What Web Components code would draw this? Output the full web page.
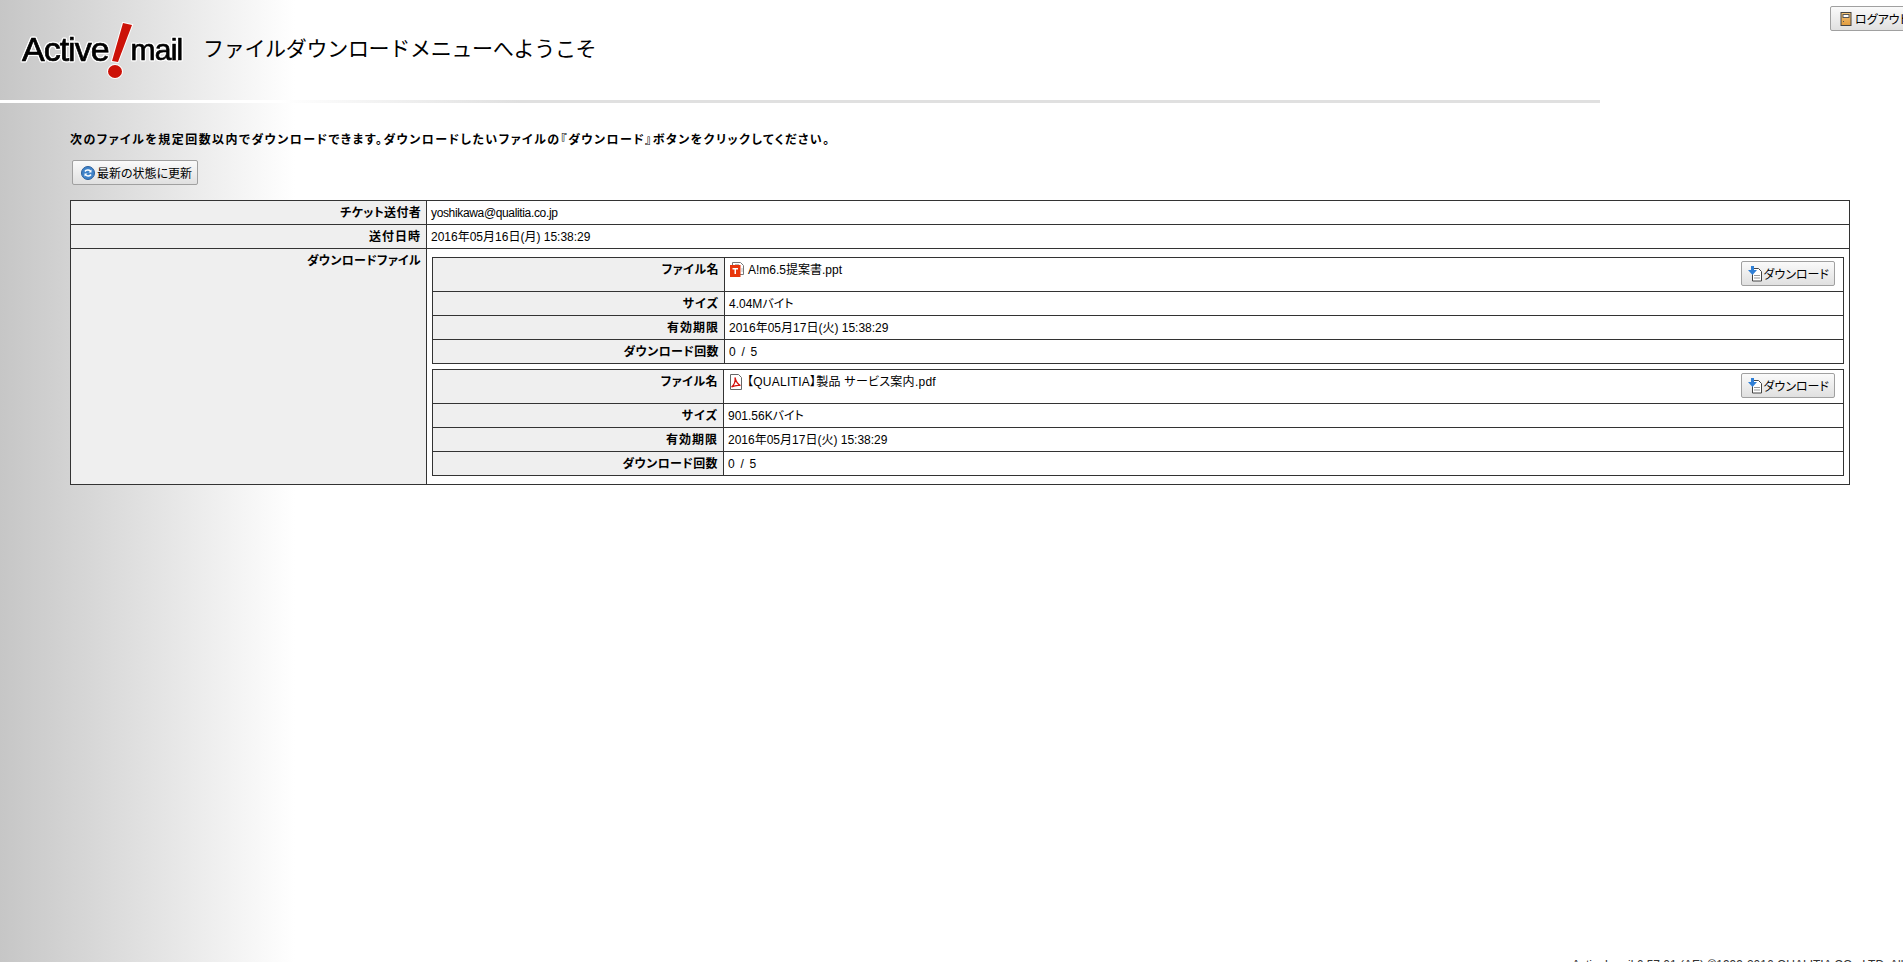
<!DOCTYPE html>
<html lang="ja">
<head>
<meta charset="utf-8">
<title>Active! mail</title>
<style>
  html, body { margin: 0; height: 100%; overflow: hidden; }
  body {
    width: 1903px;
    height: 962px;
    font: 12px "Liberation Sans", "Noto Sans CJK JP", sans-serif;
    color: #000;
    background: #fff linear-gradient(to right, #c6c6c6 0, #e2e2e2 150px, #fff 295px) no-repeat;
    display: flex;
    flex-direction: column;
  }
</style>
</head>
<body>
  <am-header title-text="ファイルダウンロードメニューへようこそ"></am-header>
  <am-content>
    <am-ticket sender="yoshikawa@qualitia.co.jp" sent="2016年05月16日(月) 15:38:29">
      <am-file name="A!m6.5提案書.ppt" kind="ppt" size="4.04Mバイト" limit="2016年05月17日(火) 15:38:29" count="0 / 5" label-width="292"></am-file>
      <am-file name="【QUALITIA】製品 サービス案内.pdf" kind="pdf" size="901.56Kバイト" limit="2016年05月17日(火) 15:38:29" count="0 / 5" label-width="291"></am-file>
    </am-ticket>
  </am-content>
  <am-footer>Active! mail 6.57.01 (AE) ©1999-2016 QUALITIA CO., LTD. All Rights Reserved.</am-footer>

<script>
// Icons, all 16x16 and drawn by hand from the reference
const ICONS = {
  logout: `<svg width="16" height="16" viewBox="0 0 16 16"><defs><linearGradient id="door" x1="0" y1="0" x2="0" y2="1"><stop offset="0" stop-color="#f6c67a"/><stop offset="1" stop-color="#e09a3c"/></linearGradient></defs><rect x="3" y="1.500" width="10" height="13" fill="url(#door)" stroke="#444"/><rect x="5" y="3.500" width="6" height="3" fill="#fff" stroke="#555"/><rect x="5" y="10" width="1" height="1" fill="#555"/></svg>`,
  refresh: `<svg width="16" height="16" viewBox="0 0 16 16"><circle cx="8" cy="8" r="6.500" fill="#3f83c9" stroke="#2a5f9c"/><path d="M5 6.500C6 4.800 9 4.600 10.500 6M11 9.500C10 11.200 7 11.400 5.500 10" fill="none" stroke="#fff" stroke-width="1.500"/><path d="M11.500 4.500v3H8.500zM4.500 11.500v-3h3z" fill="#fff"/></svg>`,
  download: `<svg width="16" height="16" viewBox="0 0 16 16"><path d="M4.500 2.500h6l3 3v9.500h-9z" fill="#fff" stroke="#444"/><path d="M6 9.500h6M6 12h6" stroke="#999"/><path d="M3 0h3v4h3L4.500 9 0 4h3z" fill="#2f7fd6"/></svg>`,
  ppt: `<svg width="16" height="16" viewBox="0 0 16 16"><path d="M3.500 .5h8l3 3v9h-11z" fill="#fff" stroke="#777"/><path d="M6 2.500h4M13 6v4" stroke="#bbb"/><rect x="1" y="3" width="10.500" height="12" fill="#e8360c"/><path d="M3.500 6h5.500v1.500H7V12H5.500V7.500h-2z" fill="#fff"/></svg>`,
  pdf: `<svg width="16" height="16" viewBox="0 0 16 16"><path d="M2.500 .5h8l3 3v12h-11z" fill="#fff" stroke="#666"/><path d="M3.500 13C6 11 7.500 7 7 3.500 8 7.500 10 10.500 12.500 11.500 9.500 11 6.500 11.500 3.500 13z" fill="none" stroke="#d4140f" stroke-width="1.200"/></svg>`
};

// Grey bevelled button with an icon in front of the label
class AmButton extends HTMLElement {
  constructor() {
    super();
    this.attachShadow({ mode: 'open' });
    this.shadowRoot.innerHTML = `
      <style>
        :host { display: inline-flex; }
        .btn {
          box-sizing: border-box;
          display: flex;
          align-items: center;
          gap: 1px;
          height: 25px;
          padding: 0 5px 0 7px;
          white-space: nowrap;
          font: 12px "Liberation Sans", "Noto Sans CJK JP", sans-serif;
          font-feature-settings: "palt";
          color: #000;
          border: 1px solid #a0a0a0;
          border-radius: 2px;
          background: linear-gradient(#fafafa, #e0e0e0);
        }
        :host([icon="download"]) .btn { padding-left: 6px; gap: 0; }
        svg { display: block; flex: none; }
      </style>
      <div class="btn">${ICONS[this.getAttribute('icon')] || ''}<slot></slot></div>
    `;
  }
}

// Top band: logo, page title and the logout button running off the right edge
class AmHeader extends HTMLElement {
  constructor() {
    super();
    this.attachShadow({ mode: 'open' });
    this.shadowRoot.innerHTML = `
      <style>
        :host { display: block; flex: none; }
        .band {
          display: grid;
          grid-template-columns: 203px 1627px 200px;
          height: 100px;
        }
        .logo { display: flex; align-items: flex-start; padding: 23px 0 0 22px; position: relative; }
        .word {
          font: 34px/1 "Liberation Sans", sans-serif;
          color: #000;
          -webkit-text-stroke: .7px #000;
          filter: drop-shadow(1px 0 0 #fff) drop-shadow(-1px 0 0 #fff) drop-shadow(0 1px 0 #fff) drop-shadow(0 -1px 0 #fff);
          letter-spacing: -1px;
          margin-top: 9px;
        }
        .word.mail { font-size: 30px; margin-top: 12px; margin-left: 22px; letter-spacing: -.8px; }
        .bang { position: absolute; left: 98px; top: 20px; }
        h1 {
          margin: 0;
          padding-top: 35px;
          font: 21px/1.2 "Noto Sans CJK JP", sans-serif;
          letter-spacing: -.3px;
          white-space: nowrap;
        }
        .out { padding-top: 6px; }
        .rule {
          width: 1600px;
          height: 3px;
          background: linear-gradient(to right, #fff 0, #fff 280px, #e0e0e0 520px);
        }
      </style>
      <div class="band">
        <div class="logo">
          <span class="word">Active</span>
          <svg class="bang" width="40" height="62" viewBox="0 0 40 62">
            <path d="M25 3 L34 5 L20 42 L14 41 Z" fill="#cc1208" stroke="#fff" stroke-width="2" paint-order="stroke"/>
            <ellipse cx="17" cy="51.500" rx="7" ry="6.500" fill="#cc1208" stroke="#fff" stroke-width="2" paint-order="stroke"/>
          </svg>
          <span class="word mail">mail</span>
        </div>
        <h1>${this.getAttribute('title-text')}</h1>
        <div class="out"><am-button icon="logout">ログアウト</am-button></div>
      </div>
      <div class="rule"></div>
    `;
  }
}

// Page body under the header: the instruction line, refresh button and table
class AmContent extends HTMLElement {
  constructor() {
    super();
    this.attachShadow({ mode: 'open' });
    this.shadowRoot.innerHTML = `
      <style>
        :host { display: block; flex: 1; padding: 28px 53px 0 70px; }
        p { margin: 0 0 11px; font-weight: bold; font-feature-settings: "palt"; letter-spacing: 1.450px; line-height: 18px; height: 18px; white-space: nowrap; }
        .bar { padding-left: 2px; margin-bottom: 15px; height: 25px; }
      </style>
      <p>次のファイルを規定回数以内でダウンロードできます。ダウンロードしたいファイルの『ダウンロード』ボタンをクリックしてください。</p>
      <div class="bar"><am-button icon="refresh">最新の状態に更新</am-button></div>
      <slot></slot>
    `;
  }
}

// One label/value row, shared by the outer table and the file tables
class AmRow extends HTMLElement {
  constructor() {
    super();
    this.attachShadow({ mode: 'open' });
    this.shadowRoot.innerHTML = `
      <style>
        :host { display: grid; grid-template-columns: var(--label-width) 1fr; border-top: 1px solid #333; }
        :host(:first-of-type) { border-top: 0; }
        .label {
          box-sizing: border-box;
          padding: 1px 5px 0 0;
          background: #efefef;
          border-right: 1px solid #333;
          text-align: right;
          font-weight: bold;
          font-feature-settings: "palt";
          letter-spacing: ${this.getAttribute('spacing') || 1}px;
          line-height: 22px;
          min-height: 23px;
        }
        .value { box-sizing: border-box; padding: 1px 4px 0; line-height: 22px; min-height: 23px; min-width: 0; font-feature-settings: "palt"; }
      </style>
      <div class="label">${this.getAttribute('label')}</div>
      <div class="value"><slot></slot></div>
    `;
  }
}

// Outer table: sender, send date and the list of files
class AmTicket extends HTMLElement {
  constructor() {
    super();
    this.attachShadow({ mode: 'open' });
    this.shadowRoot.innerHTML = `
      <style>
        :host { display: block; border: 1px solid #333; --label-width: 356px; }
        .files { display: flex; flex-direction: column; gap: 5px; padding: 7px 1px 8px 1px; }
        .mail { letter-spacing: -.35px; }
      </style>
      <am-row label="チケット送付者" spacing=".3"><span class="mail">${this.getAttribute('sender')}</span></am-row>
      <am-row label="送付日時">${this.getAttribute('sent')}</am-row>
      <am-row label="ダウンロードファイル" spacing=".3"><div class="files"><slot></slot></div></am-row>
    `;
  }
}

// Nested table for one downloadable file
class AmFile extends HTMLElement {
  constructor() {
    super();
    this.attachShadow({ mode: 'open' });
    this.shadowRoot.innerHTML = `
      <style>
        :host { display: block; border: 1px solid #333; --label-width: ${this.getAttribute('label-width')}px; }
        .name { display: flex; justify-content: space-between; height: 32px; padding-right: 4px; }
        .file { display: flex; gap: 3px; align-items: flex-start; }
        :host([kind="pdf"]) .file span { letter-spacing: .26px; }
        .file svg { display: block; flex: none; margin-top: 3px; }
        .dl { padding-top: 2px; }
        .num { letter-spacing: 1.200px; }
      </style>
      <am-row label="ファイル名" spacing=".5">
        <div class="name">
          <div class="file">${ICONS[this.getAttribute('kind')]}<span>${this.getAttribute('name')}</span></div>
          <div class="dl"><am-button icon="download">ダウンロード</am-button></div>
        </div>
      </am-row>
      <am-row label="サイズ">${this.getAttribute('size')}</am-row>
      <am-row label="有効期限">${this.getAttribute('limit')}</am-row>
      <am-row label="ダウンロード回数" spacing=".4"><span class="num">${this.getAttribute('count')}</span></am-row>
    `;
  }
}

// Copyright line, cut by the bottom of the window
class AmFooter extends HTMLElement {
  constructor() {
    super();
    this.attachShadow({ mode: 'open' });
    this.shadowRoot.innerHTML = `
      <style>
        :host { display: block; flex: none; height: 4px; padding-left: 1572px; white-space: nowrap; font-size: 12px; line-height: 14px; color: #333; }
      </style>
      <slot></slot>
    `;
  }
}

customElements.define('am-button', AmButton);
customElements.define('am-header', AmHeader);
customElements.define('am-content', AmContent);
customElements.define('am-row', AmRow);
customElements.define('am-ticket', AmTicket);
customElements.define('am-file', AmFile);
customElements.define('am-footer', AmFooter);
</script>
</body>
</html>
